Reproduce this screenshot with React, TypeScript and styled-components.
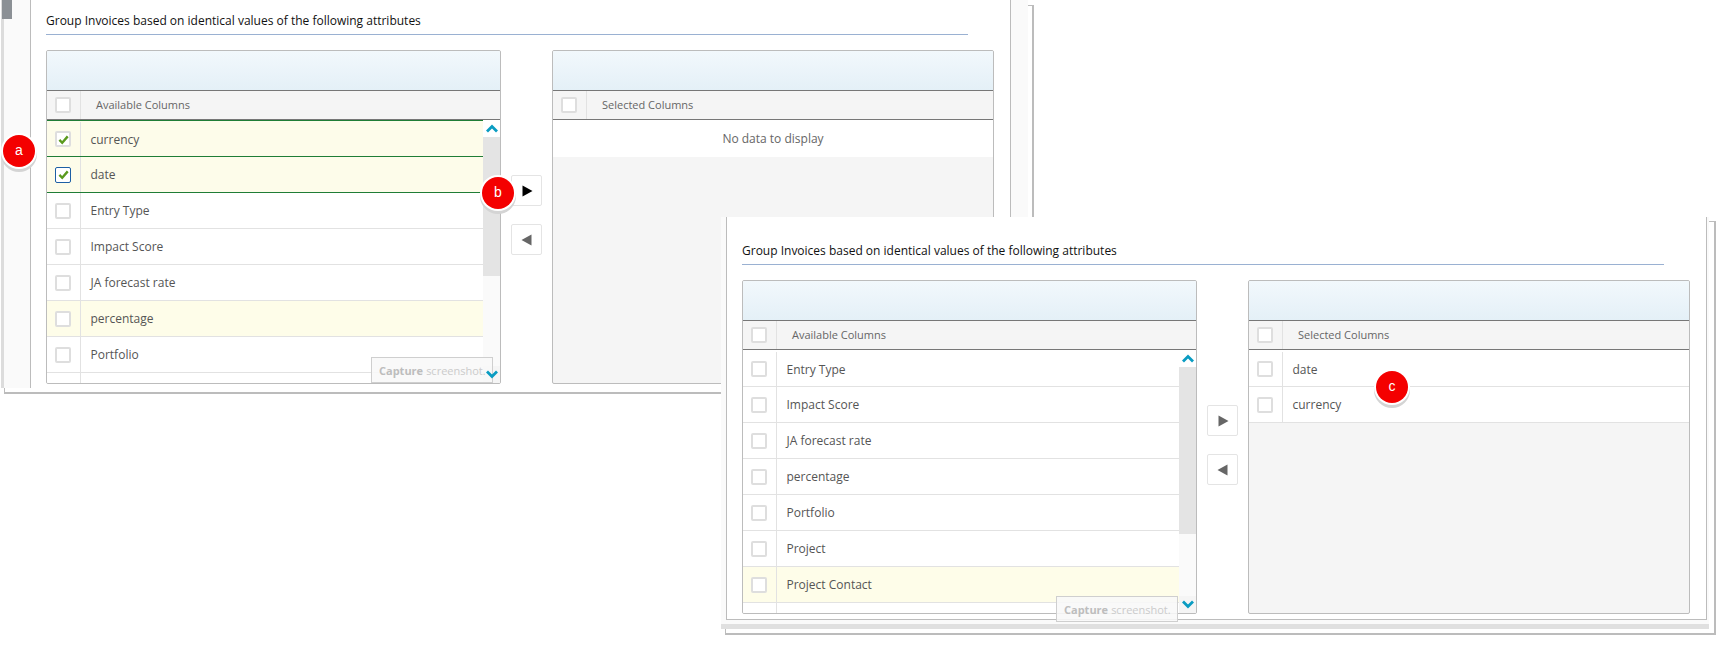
import React from "react";
import styled, { createGlobalStyle } from "styled-components";

const Global = createGlobalStyle`
  html, body { margin: 0; padding: 0; background: #fff; }
  * { box-sizing: border-box; }
`;

const Stage = styled.main`
  position: relative;
  width: 1726px;
  height: 646px;
  overflow: hidden;
  background: #fff;
  font-family: "Open Sans", "Liberation Sans", sans-serif;
`;

const Window = styled.section<{ $left: number; $top: number; $width: number; $height: number; $hookLeft: number; $hookTop: number }>`
  position: absolute;
  left: ${(p) => p.$left}px;
  top: ${(p) => p.$top}px;
  width: ${(p) => p.$width}px;
  height: ${(p) => p.$height}px;
  &::before {
    content: "";
    position: absolute;
    left: ${(p) => p.$hookLeft}px;
    top: ${(p) => p.$hookTop}px;
    right: 0;
    bottom: 0;
    border: 1px solid #bcbcbc;
    border-right-width: 2px;
    border-bottom-width: 2px;
  }
`;

const Pane = styled.div<{ $width: number; $height: number; $footer: boolean }>`
  position: relative;
  display: flex;
  align-items: flex-start;
  width: ${(p) => p.$width}px;
  height: ${(p) => p.$height}px;
  background: #fafafa;
  border-bottom: ${(p) => (p.$footer ? "5px solid #e0e0e0" : "none")};
`;

const Rail = styled.div<{ $width: number; $edge: boolean }>`
  flex: none;
  width: ${(p) => p.$width}px;
  height: 100%;
  border-left: ${(p) => (p.$edge ? "3px solid #dcdcdc" : "none")};
`;

const Handle = styled.div`
  width: 10px;
  height: 19px;
  margin-left: -2px;
  background: #8b9095;
`;

const Content = styled.div<{ $height: number; $top: number; $closed: boolean }>`
  flex: none;
  width: 981px;
  height: ${(p) => p.$height}px;
  padding: ${(p) => p.$top}px 0 0 15px;
  background: #fff;
  border-left: 1px solid #bcbcbc;
  border-right: 1px solid #bcbcbc;
  border-bottom: ${(p) => (p.$closed ? "1px solid #bcbcbc" : "none")};
`;

const Title = styled.h2`
  height: 24px;
  margin: 0 42px 0 0;
  padding-bottom: 3px;
  font-size: 12px;
  line-height: 20px;
  font-weight: 400;
  color: #111;
  border-bottom: 1px solid #9ab1d2;
`;

const Columns = styled.div`
  display: flex;
  align-items: flex-start;
  margin-top: 15px;
`;

const Panel = styled.div<{ $width: number }>`
  flex: none;
  display: flex;
  flex-direction: column;
  width: ${(p) => p.$width}px;
  height: 334px;
  overflow: hidden;
  border: 1px solid #bcbcbc;
  border-radius: 2px;
  background: #f5f5f5;
`;

const Band = styled.div`
  flex: none;
  height: 39px;
  background: linear-gradient(#f2f8fc, #e4f0f7);
`;

const HeaderRow = styled.div`
  flex: none;
  display: flex;
  height: 30px;
  background: #f5f5f5;
  border-top: 1px solid #777;
  border-bottom: 1px solid #777;
`;

const CheckCell = styled.div`
  flex: none;
  display: flex;
  align-items: center;
  width: 34px;
  padding-left: 8px;
  border-right: 1px solid #e2e2e2;
`;

const HeaderLabel = styled.div`
  padding-left: 15px;
  font-size: 11px;
  line-height: 27px;
  color: #666;
`;

const Body = styled.div`
  flex: 1;
  display: flex;
  min-height: 0;
`;

const List = styled.div`
  flex: 1;
  min-width: 0;
  overflow: hidden;
`;

const Row = styled.div<{ $tone?: "plain" | "hint" | "picked"; $first?: boolean }>`
  display: flex;
  height: ${(p) => (p.$first ? 37 : 36)}px;
  padding-top: ${(p) => (p.$first ? 1 : 0)}px;
  background: ${(p) => (p.$tone === "picked" ? "#fdfcea" : p.$tone === "hint" ? "#fefde9" : "#fff")};
  border-bottom: 1px solid ${(p) => (p.$tone === "picked" ? "#1f7d36" : "#e2e2e2")};
  border-top: ${(p) => (p.$first ? `1px solid ${p.$tone === "picked" ? "#1f7d36" : "transparent"}` : "none")};
`;

const RowLabel = styled.div`
  padding-left: 9.5px;
  font-size: 12px;
  line-height: 35px;
  color: #555;
`;

const Empty = styled.div`
  height: 37px;
  background: #fff;
  font-size: 12px;
  line-height: 38px;
  text-align: center;
  color: #666;
`;

const Box = styled.span<{ $focus?: boolean }>`
  display: flex;
  align-items: center;
  justify-content: center;
  width: 16px;
  height: 16px;
  background: #fff;
  border: ${(p) => (p.$focus ? "1.5px solid #1d5fa5" : "2px solid #dedede")};
  border-radius: 2px;
`;

const Scroll = styled.div`
  flex: none;
  display: flex;
  flex-direction: column;
  width: 17px;
  background: #fafafa;
`;

const ScrollEnd = styled.div<{ $top?: boolean }>`
  flex: none;
  display: flex;
  align-items: center;
  justify-content: center;
  height: 17px;
  background: ${(p) => (p.$top ? "#fff" : "#f5f5f5")};
`;

const Thumb = styled.div<{ $height: number }>`
  flex: none;
  height: ${(p) => p.$height}px;
  background: #e4e4e4;
`;

const ScrollRest = styled.div`
  flex: 1;
`;

const Transfer = styled.div`
  flex: none;
  display: flex;
  flex-direction: column;
  gap: 18px;
  padding: 125px 10px 0 10px;
`;

const MoveButton = styled.div`
  display: flex;
  align-items: center;
  justify-content: center;
  width: 31px;
  height: 31px;
  background: #fff;
  border: 1px solid #e4e4e4;
  border-radius: 2px;
`;

const Marker = styled.div<{ $x: number; $y: number }>`
  position: absolute;
  left: ${(p) => p.$x - 16}px;
  top: ${(p) => p.$y - 16}px;
  width: 32px;
  height: 32px;
  border-radius: 50%;
  background: #f40000;
  color: #fff;
  font-family: "Liberation Sans", sans-serif;
  font-size: 14px;
  line-height: 31px;
  text-align: center;
  box-shadow: 0 0 0 2px #fff, 0 3px 0 2px #d4d4d4;
`;

const Capture = styled.div<{ $x: number; $y: number }>`
  position: absolute;
  left: ${(p) => p.$x}px;
  top: ${(p) => p.$y}px;
  display: flex;
  align-items: center;
  gap: 3px;
  width: 122px;
  height: 26px;
  padding-left: 7px;
  font-size: 11px;
  color: #cbcbcb;
  white-space: nowrap;
  background: rgba(248, 248, 248, 0.88);
  border: 1px solid #cfcfcf;
  b {
    color: #bdbdbd;
    font-weight: 700;
  }
`;

const ChevronMark = styled.svg`
  position: relative;
  z-index: 1;
`;

const ForwardMark = styled.svg<{ $forward: boolean }>`
  margin-left: ${(p) => (p.$forward ? 2 : 0)}px;
`;

const Tick = () => (
  <svg width="11" height="11" viewBox="0 0 12 12" aria-hidden="true">
    <path d="M1.5 6.5 L4.6 9.6 L10.6 2.6" fill="none" stroke="#5a9a1e" strokeWidth="2.6" />
  </svg>
);

const Triangle = ({ dir, color }: { dir: "left" | "right"; color: string }) => (
  <ForwardMark $forward={dir === "right"} width="11" height="12" viewBox="0 0 11 12" aria-hidden="true">
    <path d={dir === "right" ? "M0.5 0.5 L10.5 6 L0.5 11.5 Z" : "M10.5 0.5 L0.5 6 L10.5 11.5 Z"} fill={color} />
  </ForwardMark>
);

const Chevron = ({ up }: { up?: boolean }) => (
  <ChevronMark width="12" height="9" viewBox="0 0 12 9" aria-hidden="true">
    <path d={up ? "M1 7.5 L6 2.5 L11 7.5" : "M1 1.5 L6 6.5 L11 1.5"} fill="none" stroke="#0a9cc2" strokeWidth="2.8" />
  </ChevronMark>
);

type Item = { label?: string; tone?: "plain" | "hint" | "picked"; checked?: boolean; focus?: boolean; blank?: boolean };

const Check = ({ checked, focus }: { checked?: boolean; focus?: boolean }) => (
  <Box $focus={focus}>{checked && <Tick />}</Box>
);

const Rows = ({ items }: { items: Item[] }) => (
  <>
    {items.map((it, i) => (
      <Row key={i} $tone={it.tone} $first={i === 0}>
        <CheckCell>{!it.blank && <Check checked={it.checked} focus={it.focus} />}</CheckCell>
        <RowLabel>{it.label}</RowLabel>
      </Row>
    ))}
  </>
);

const Grid = ({
  heading,
  width,
  thumb,
  children,
}: {
  heading: string;
  width: number;
  thumb?: number;
  children: React.ReactNode;
}) => (
  <Panel $width={width}>
    <Band />
    <HeaderRow>
      <CheckCell>
        <Box />
      </CheckCell>
      <HeaderLabel>{heading}</HeaderLabel>
    </HeaderRow>
    <Body>
      <List>{children}</List>
      {thumb !== undefined && (
        <Scroll>
          <ScrollEnd $top>
            <Chevron up />
          </ScrollEnd>
          <Thumb $height={thumb} />
          <ScrollRest />
          <ScrollEnd>
            <Chevron />
          </ScrollEnd>
        </Scroll>
      )}
    </Body>
  </Panel>
);

const Moves = ({ active }: { active?: boolean }) => (
  <Transfer>
    <MoveButton>
      <Triangle dir="right" color={active ? "#000" : "#666"} />
    </MoveButton>
    <MoveButton>
      <Triangle dir="left" color="#666" />
    </MoveButton>
  </Transfer>
);

const TITLE = "Group Invoices based on identical values of the following attributes";

const firstItems: Item[] = [
  { label: "currency", tone: "picked", checked: true },
  { label: "date", tone: "picked", checked: true, focus: true },
  { label: "Entry Type" },
  { label: "Impact Score" },
  { label: "JA forecast rate" },
  { label: "percentage", tone: "hint" },
  { label: "Portfolio" },
  { blank: true },
];

const secondItems: Item[] = [
  { label: "Entry Type" },
  { label: "Impact Score" },
  { label: "JA forecast rate" },
  { label: "percentage" },
  { label: "Portfolio" },
  { label: "Project" },
  { label: "Project Contact", tone: "hint" },
  { blank: true },
];

export default function App() {
  return (
    <Stage>
      <Global />
      <Window $left={1} $top={0} $width={1033} $height={394} $hookLeft={3} $hookTop={5}>
        <Pane $width={1027} $height={388} $footer={false}>
          <Rail $width={29} $edge>
            <Handle />
          </Rail>
          <Content $height={388} $top={11} $closed={false}>
            <Title>{TITLE}</Title>
            <Columns>
              <Grid heading="Available Columns" width={455} thumb={139}>
                <Rows items={firstItems} />
              </Grid>
              <Moves active />
              <Grid heading="Selected Columns" width={442}>
                <Empty>No data to display</Empty>
              </Grid>
            </Columns>
          </Content>
        </Pane>
      </Window>

      <Window $left={721} $top={217} $width={995} $height={418} $hookLeft={4} $hookTop={4}>
        <Pane $width={988} $height={412} $footer>
          <Rail $width={5} $edge={false} />
          <Content $height={403} $top={24} $closed>
            <Title>{TITLE}</Title>
            <Columns>
              <Grid heading="Available Columns" width={455} thumb={167}>
                <Rows items={secondItems} />
              </Grid>
              <Moves />
              <Grid heading="Selected Columns" width={442}>
                <Rows items={[{ label: "date" }, { label: "currency" }]} />
              </Grid>
            </Columns>
          </Content>
        </Pane>
      </Window>

      <Capture $x={371} $y={357}>
        <b>Capture</b> screenshot.
      </Capture>
      <Capture $x={1056} $y={596}>
        <b>Capture</b> screenshot.
      </Capture>

      <Marker $x={19} $y={151}>a</Marker>
      <Marker $x={498} $y={193}>b</Marker>
      <Marker $x={1392} $y={387}>c</Marker>
    </Stage>
  );
}
